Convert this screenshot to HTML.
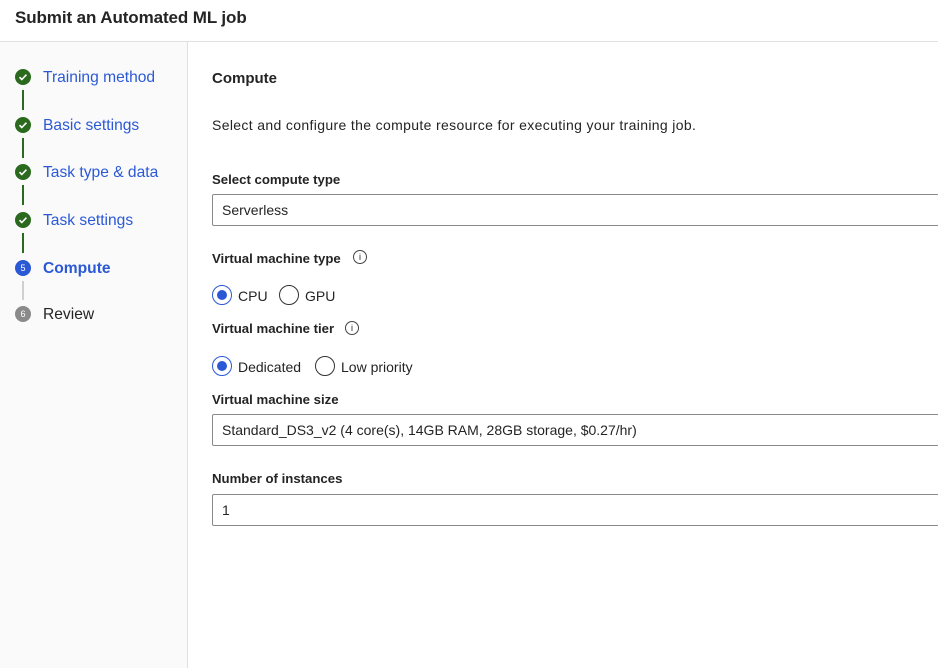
<!DOCTYPE html>
<html><head><style>
*{box-sizing:border-box;margin:0;padding:0}
body{width:938px;height:668px;overflow:hidden;background:#fff;font-family:"Liberation Sans",sans-serif;color:#242424;position:relative}
.hdr{position:absolute;left:0;top:0;width:938px;height:42px;border-bottom:1px solid #e0e0e0;background:#fff}
.hdr span{position:absolute;left:15px;top:8px;font-size:17px;font-weight:bold;letter-spacing:-0.1px}
.side{position:absolute;left:0;top:42px;width:188px;height:626px;background:#fafafa;border-right:1px solid #e0e0e0}
.step{position:absolute;left:43px;font-size:15.6px;color:#2b59d6}
.dot{position:absolute;left:15px;width:16px;height:16px;border-radius:50%;background:#2b6a1e;color:#fff;font-size:9px;text-align:center;line-height:16px}
.line{position:absolute;left:22px;width:2px;background:#2b6a1e}
.t{position:absolute;left:212px;font-size:14px}
.b{font-weight:bold;font-size:13.2px}
.inp{position:absolute;left:212px;width:740px;height:32px;border:1px solid #8a8a8a;border-radius:2px;font-size:14px;padding:7px 9px}
.r{position:absolute;width:20px;height:20px;border-radius:50%;border:1px solid #333}
.r.on{border-color:#2b59d6}
.r.on::after{content:"";position:absolute;left:4px;top:4px;width:10px;height:10px;border-radius:50%;background:#2b59d6}
.i{position:absolute;width:14px;height:14px;border:1px solid #444;border-radius:50%;font-size:9px;text-align:center;line-height:12px}
</style></head><body>
<div class="hdr"><span>Submit an Automated ML job</span></div>
<div class="side"></div>
<div class="dot" style="top:69px"><svg width="16" height="16"><path d="M4.5 8.2l2.3 2.3 4.6-4.8" stroke="#fff" stroke-width="1.6" fill="none"/></svg></div>
<div class="line" style="top:90px;height:20px"></div>
<div class="dot" style="top:117px"><svg width="16" height="16"><path d="M4.5 8.2l2.3 2.3 4.6-4.8" stroke="#fff" stroke-width="1.6" fill="none"/></svg></div>
<div class="line" style="top:138px;height:20px"></div>
<div class="dot" style="top:164px"><svg width="16" height="16"><path d="M4.5 8.2l2.3 2.3 4.6-4.8" stroke="#fff" stroke-width="1.6" fill="none"/></svg></div>
<div class="line" style="top:185px;height:20px"></div>
<div class="dot" style="top:212px"><svg width="16" height="16"><path d="M4.5 8.2l2.3 2.3 4.6-4.8" stroke="#fff" stroke-width="1.6" fill="none"/></svg></div>
<div class="line" style="top:233px;height:20px"></div>
<div class="dot" style="top:260px;background:#2b59d6">5</div>
<div class="line" style="top:281px;height:19px;background:#d0d0d0"></div>
<div class="dot" style="top:306px;background:#8a8a8a">6</div>
<div class="step" style="top:69px">Training method</div>
<div class="step" style="top:117px">Basic settings</div>
<div class="step" style="top:164px">Task type &amp; data</div>
<div class="step" style="top:212px">Task settings</div>
<div class="step" style="top:260px;font-weight:bold">Compute</div>
<div class="step" style="top:306px;color:#242424">Review</div>

<div class="t" style="top:70px;font-size:15px;font-weight:bold">Compute</div>
<div class="t" style="top:117px;letter-spacing:0.35px">Select and configure the compute resource for executing your training job.</div>
<div class="t b" style="top:172px">Select compute type</div>
<div class="inp" style="top:194px">Serverless</div>
<div class="t b" style="top:251px">Virtual machine type</div>
<div class="i" style="left:353px;top:250px">i</div>
<div class="r on" style="left:212px;top:285px"></div><div class="t" style="left:238px;top:288px">CPU</div>
<div class="r" style="left:279px;top:285px"></div><div class="t" style="left:305px;top:288px">GPU</div>
<div class="t b" style="top:321px">Virtual machine tier</div>
<div class="i" style="left:345px;top:321px">i</div>
<div class="r on" style="left:212px;top:356px"></div><div class="t" style="left:238px;top:359px">Dedicated</div>
<div class="r" style="left:315px;top:356px"></div><div class="t" style="left:341px;top:359px">Low priority</div>
<div class="t b" style="top:392px">Virtual machine size</div>
<div class="inp" style="top:414px">Standard_DS3_v2 (4 core(s), 14GB RAM, 28GB storage, $0.27/hr)</div>
<div class="t b" style="top:471px">Number of instances</div>
<div class="inp" style="top:494px">1</div>
</body></html>
